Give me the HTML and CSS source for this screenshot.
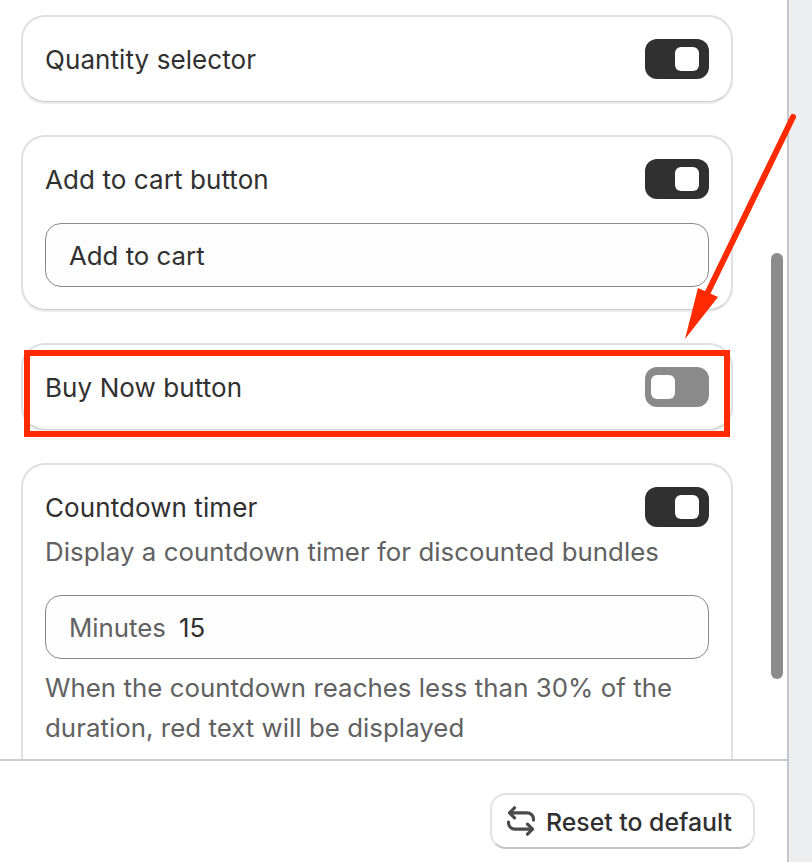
FILE: index.html
```html
<!DOCTYPE html>
<html lang="en">
<head>
    <meta charset="UTF-8">
    <meta name="viewport" content="width=device-width, initial-scale=1.0">
    <title>Bundle settings</title>
    <link rel="stylesheet" href="styles.css">
</head>
<body>
    <div class="panel">
        <div class="scroll-area">
            <div class="card">
                <div class="card-row">
                    <span class="card-title">Quantity selector</span>
                    <span class="toggle on"><span class="knob"></span></span>
                </div>
            </div>

            <div class="card">
                <div class="card-row">
                    <span class="card-title">Add to cart button</span>
                    <span class="toggle on"><span class="knob"></span></span>
                </div>
                <div class="field field-spaced">Add to cart</div>
            </div>

            <div class="card">
                <div class="card-row">
                    <span class="card-title">Buy Now button</span>
                    <span class="toggle off"><span class="knob"></span></span>
                </div>
            </div>

            <div class="card card-long">
                <div class="card-row">
                    <span class="card-title">Countdown timer</span>
                    <span class="toggle on"><span class="knob"></span></span>
                </div>
                <p class="hint hint-top">Display a countdown timer for discounted bundles</p>
                <div class="field"><span class="field-prefix">Minutes</span>15</div>
                <p class="hint">When the countdown reaches less than 30% of the duration, red text will be displayed</p>
            </div>

            <div class="scrollbar"></div>
        </div>

        <div class="footer">
            <button class="reset-btn">
                <svg class="reset-icon" viewBox="0 0 28 30" fill="none" stroke="#4a4a4a" stroke-width="3.2" stroke-linecap="round" stroke-linejoin="round">
                    <path d="M7.5 1.8 2.5 6.8l5 5"/>
                    <path d="M3 6.8h17a6.500 6.500 0 0 1 6.500 6.500v.7"/>
                    <path d="M20.500 18.200l5 5-5 5"/>
                    <path d="M25 23.200H8a6.500 6.500 0 0 1-6.500-6.500V16"/>
                </svg>
                <span class="reset-label">Reset to default</span>
            </button>
        </div>
    </div>

    <!-- annotations drawn over the screenshot -->
    <div class="highlight-box"></div>
    <svg class="arrow" width="812" height="862" viewBox="0 0 812 862">
        <line x1="793" y1="117" x2="707" y2="294" stroke="#ff2a00" stroke-width="6" stroke-linecap="round"/>
        <polygon points="698,288 718,297 685,339" fill="#ff2a00"/>
    </svg>
</body>
</html>
```

FILE: styles.css
```css
* {
    box-sizing: border-box;
    margin: 0;
    padding: 0;
}

html, body {
    height: 862px;
    overflow: hidden;
}

body {
    background-color: #edeef0;
    color: #303030;
    font-family: "Inter", "Liberation Sans", sans-serif;
    font-size: 26px;
    line-height: 40px;
}

.panel {
    display: flex;
    flex-direction: column;
    width: 789px;
    height: 862px;
    background-color: white;
    border-right: 2px solid #c4c7cb;
}

.scroll-area {
    position: relative;
    flex: 1;
    min-height: 0;
    overflow: hidden;
    display: flex;
    flex-direction: column;
    gap: 33px;
    padding: 15px 54px 0 21px;
}

.card {
    flex-shrink: 0;
    background-color: white;
    border: 2px solid #e0e0e0;
    border-bottom: 1px solid #cccccc;
    border-radius: 24px;
    box-shadow: 0 2px 0 #ececec;
    padding: 22px;
}

.card-long {
    padding-bottom: 60px;
}

.card-row {
    display: flex;
    justify-content: space-between;
    align-items: center;
}

.card-title {
    position: relative;
    top: 1px;
    letter-spacing: 0.08px;
}

.toggle {
    display: flex;
    align-items: center;
    width: 64px;
    height: 40px;
    border-radius: 12px;
}

.toggle.on {
    background-color: #303030;
    justify-content: flex-end;
    padding-right: 10px;
}

.toggle.off {
    background-color: #8a8a8a;
    padding-left: 6px;
}

.knob {
    width: 24px;
    height: 24px;
    border-radius: 6px;
    background-color: white;
}

.field {
    height: 64px;
    padding: 2px 23px 0;
    display: flex;
    align-items: center;
    background-color: #fdfdfd;
    border: 1px solid #8a8a8a;
    border-radius: 16px;
    font-size: 25.800px;
}

.field-spaced {
    margin-top: 24px;
}

.field-prefix {
    color: #616161;
    margin-right: 13px;
}

.hint {
    color: #616161;
    font-size: 25.800px;
    letter-spacing: 0.05px;
    margin-top: 9px;
}

.hint-top {
    margin-top: 5px;
    margin-bottom: 23px;
}

.scrollbar {
    position: absolute;
    left: 771px;
    top: 253px;
    width: 12px;
    height: 426px;
    border-radius: 6px;
    background-color: #8c8c8c;
}

.footer {
    flex-shrink: 0;
    height: 103px;
    display: flex;
    justify-content: flex-end;
    padding: 32px 32px 0 0;
    border-top: 2px solid #c9ccd0;
}

.reset-btn {
    display: flex;
    align-items: center;
    gap: 11px;
    width: 265px;
    height: 56px;
    padding: 0 15px;
    background-color: white;
    color: #303030;
    font: inherit;
    font-size: 24.800px;
    font-weight: 500;
    white-space: nowrap;
    border: 2px solid #e3e3e3;
    border-bottom-color: #c4c4c4;
    border-radius: 16px;
}

.reset-icon {
    width: 28px;
    height: 30px;
    flex-shrink: 0;
}

.reset-label {
    position: relative;
    top: 1px;
}

.highlight-box {
    position: absolute;
    left: 24px;
    top: 350px;
    width: 706px;
    height: 87px;
    border: 6px solid #ff2a00;
}

.arrow {
    position: absolute;
    left: 0;
    top: 0;
}
```
